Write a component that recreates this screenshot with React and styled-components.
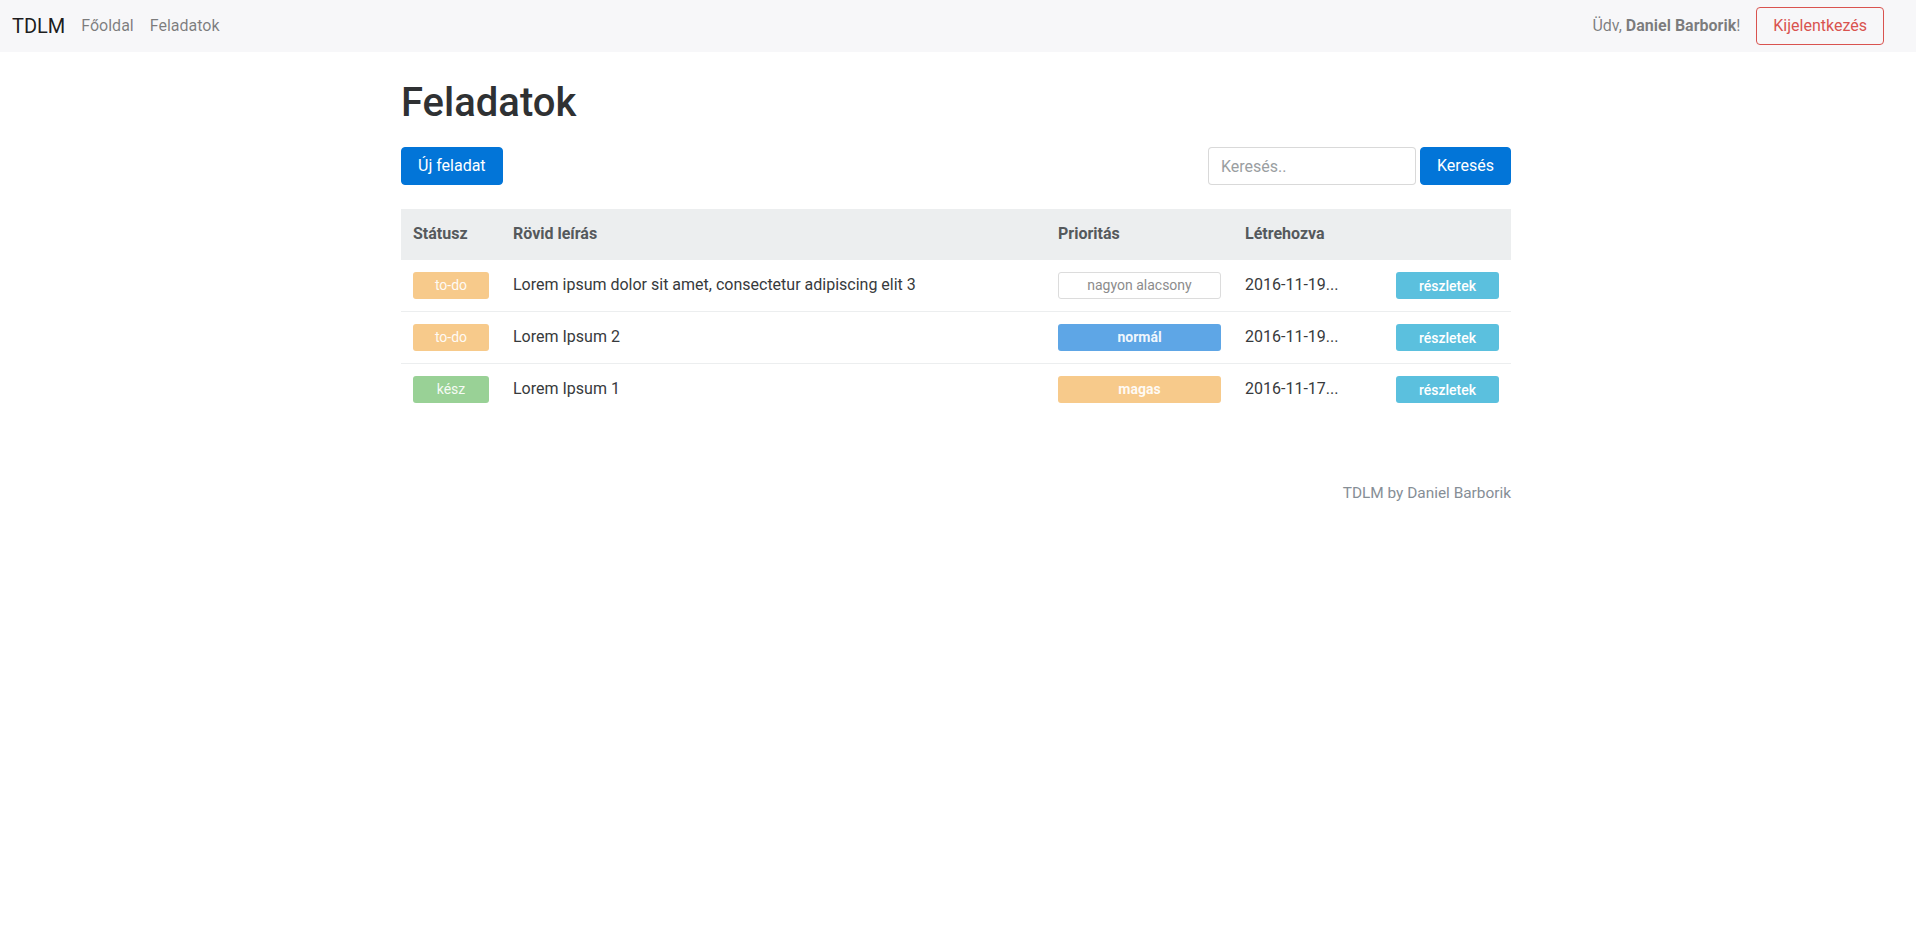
import React from "react";
import styled, { createGlobalStyle } from "styled-components";

const GlobalStyle = createGlobalStyle`
  body {
    margin: 0;
    background: #fff;
    font-family: Roboto, "Liberation Sans", sans-serif;
    font-size: 16px;
    line-height: 1.5;
    color: #373a3c;
  }
  * { box-sizing: border-box; }
`;

const tasks = [
  { status: "todo", title: "Lorem ipsum dolor sit amet, consectetur adipiscing elit 3", priority: "low", created: "2016-11-19 10:12" },
  { status: "todo", title: "Lorem Ipsum 2", priority: "normal", created: "2016-11-19 09:40" },
  { status: "done", title: "Lorem Ipsum 1", priority: "high", created: "2016-11-17 18:05" },
];

const statusLabels = { todo: "to-do", done: "kész" };
const priorityLabels = { low: "nagyon alacsony", normal: "normál", high: "magas" };

export default function App() {
  return (
    <>
      <GlobalStyle />
      <Navbar>
        <NavLeft>
          <Brand href="#">TDLM</Brand>
          <NavLink href="#">Főoldal</NavLink>
          <NavLink href="#">Feladatok</NavLink>
        </NavLeft>
        <NavRight>
          <Greeting>
            Üdv, <b>Daniel Barborik</b>!
          </Greeting>
          <LogoutButton>Kijelentkezés</LogoutButton>
        </NavRight>
      </Navbar>

      <Container>
        <Title>Feladatok</Title>
        <Toolbar>
          <PrimaryButton>Új feladat</PrimaryButton>
          <SearchForm>
            <SearchInput placeholder="Keresés.." />
            <PrimaryButton>Keresés</PrimaryButton>
          </SearchForm>
        </Toolbar>

        <Table>
          <colgroup>
            <col style={{ width: 100 }} />
            <col style={{ width: 545 }} />
            <col style={{ width: 187 }} />
            <col style={{ width: 151 }} />
            <col style={{ width: 127 }} />
          </colgroup>
          <thead>
            <tr>
              <Th>Státusz</Th>
              <Th>Rövid leírás</Th>
              <Th>Prioritás</Th>
              <Th>Létrehozva</Th>
              <Th />
            </tr>
          </thead>
          <tbody>
            {tasks.map((t, i) => (
              <tr key={i}>
                <Td>
                  <StatusTag $status={t.status}>{statusLabels[t.status]}</StatusTag>
                </Td>
                <Td>{t.title}</Td>
                <Td>
                  <PriorityTag $priority={t.priority}>{priorityLabels[t.priority]}</PriorityTag>
                </Td>
                <DateCell>{t.created.slice(0, 10)}...</DateCell>
                <Td>
                  <DetailsButton>részletek</DetailsButton>
                </Td>
              </tr>
            ))}
          </tbody>
        </Table>

        <Footer>TDLM by Daniel Barborik</Footer>
      </Container>
    </>
  );
}

const Navbar = styled.nav`
  display: flex;
  align-items: center;
  justify-content: space-between;
  height: 52px;
  padding: 0 32px 0 12px;
  background: #f7f7f9;
`;

const NavLeft = styled.div`
  display: flex;
  align-items: center;
`;

const Brand = styled.a`
  font-size: 20px;
  color: rgba(0, 0, 0, 0.9);
  text-decoration: none;
  margin-right: 8px;
`;

const NavLink = styled.a`
  padding: 0 8px;
  color: rgba(0, 0, 0, 0.5);
  text-decoration: none;
`;

const NavRight = styled.div`
  display: flex;
  align-items: center;
  gap: 16px;
`;

const Greeting = styled.span`
  color: rgba(0, 0, 0, 0.5);
  b {
    font-weight: 700;
  }
`;

const LogoutButton = styled.button`
  font: inherit;
  height: 38px;
  padding: 0 16px;
  color: #d9534f;
  background: transparent;
  border: 1px solid #d9534f;
  border-radius: 4px;
`;

const Container = styled.main`
  width: 1110px;
  margin: 0 auto;
  position: relative;
  left: -2px;
`;

const Title = styled.h1`
  font-size: 40px;
  font-weight: 500;
  line-height: 1.1;
  color: #2f3133;
  margin: 29px 0 22px;
`;

const Toolbar = styled.div`
  display: flex;
  justify-content: space-between;
  align-items: center;
  margin-bottom: 24px;
`;

const SearchForm = styled.div`
  display: flex;
  gap: 4px;
`;

const PrimaryButton = styled.button`
  font: inherit;
  height: 38px;
  padding: 0 16px;
  color: #fff;
  background: #0275d8;
  border: 1px solid #0275d8;
  border-radius: 4px;
`;

const SearchInput = styled.input`
  font: inherit;
  width: 208px;
  height: 38px;
  padding: 0 12px;
  color: #464a4c;
  border: 1px solid rgba(0, 0, 0, 0.15);
  border-radius: 4px;
  &::placeholder {
    color: #9a9ea1;
  }
`;

const Table = styled.table`
  width: 100%;
  table-layout: fixed;
  border-collapse: collapse;
`;

const Th = styled.th`
  text-align: left;
  font-weight: 700;
  color: #55595c;
  background: #eceeef;
  padding: 12px;
  height: 50px;
  border-bottom: 2px solid #eceeef;
`;

const Td = styled.td`
  padding: 12px;
  height: 52px;
  color: #373a3c;
  vertical-align: top;
  line-height: 26px;
  border-top: 1px solid #eceeef;
  tbody tr:first-child & {
    border-top: none;
  }
`;

const DateCell = styled(Td)`
  white-space: nowrap;
  overflow: hidden;
`;

const Tag = styled.span`
  display: block;
  height: 27px;
  line-height: 27px;
  text-align: center;
  font-size: 14px;
  border-radius: 3px;
`;

const statusColors = { todo: "#f7ca8b", done: "#99d196" };

const StatusTag = styled(Tag)`
  background: ${(p) => statusColors[p.$status]};
  color: rgba(255, 255, 255, 0.92);
`;

const priorityColors = { low: "#fff", normal: "#5ea6e6", high: "#f7ca8b" };

const PriorityTag = styled(Tag)`
  font-weight: ${(p) => (p.$priority === "low" ? 400 : 700)};
  background: ${(p) => priorityColors[p.$priority]};
  color: ${(p) => (p.$priority === "low" ? "#8c8c8c" : "rgba(255,255,255,0.92)")};
  border: ${(p) => (p.$priority === "low" ? "1px solid #dcdcdc" : "none")};
  line-height: ${(p) => (p.$priority === "low" ? "25px" : "27px")};
`;

const DetailsButton = styled.button`
  display: block;
  width: 100%;
  height: 27px;
  padding: 0;
  font-family: inherit;
  font-size: 14px;
  font-weight: 500;
  color: #fff;
  background: #5bc0de;
  border: none;
  border-radius: 3px;
`;

const Footer = styled.footer`
  text-align: right;
  font-size: 15.4px;
  color: #868e96;
  margin-top: 66px;
`;
